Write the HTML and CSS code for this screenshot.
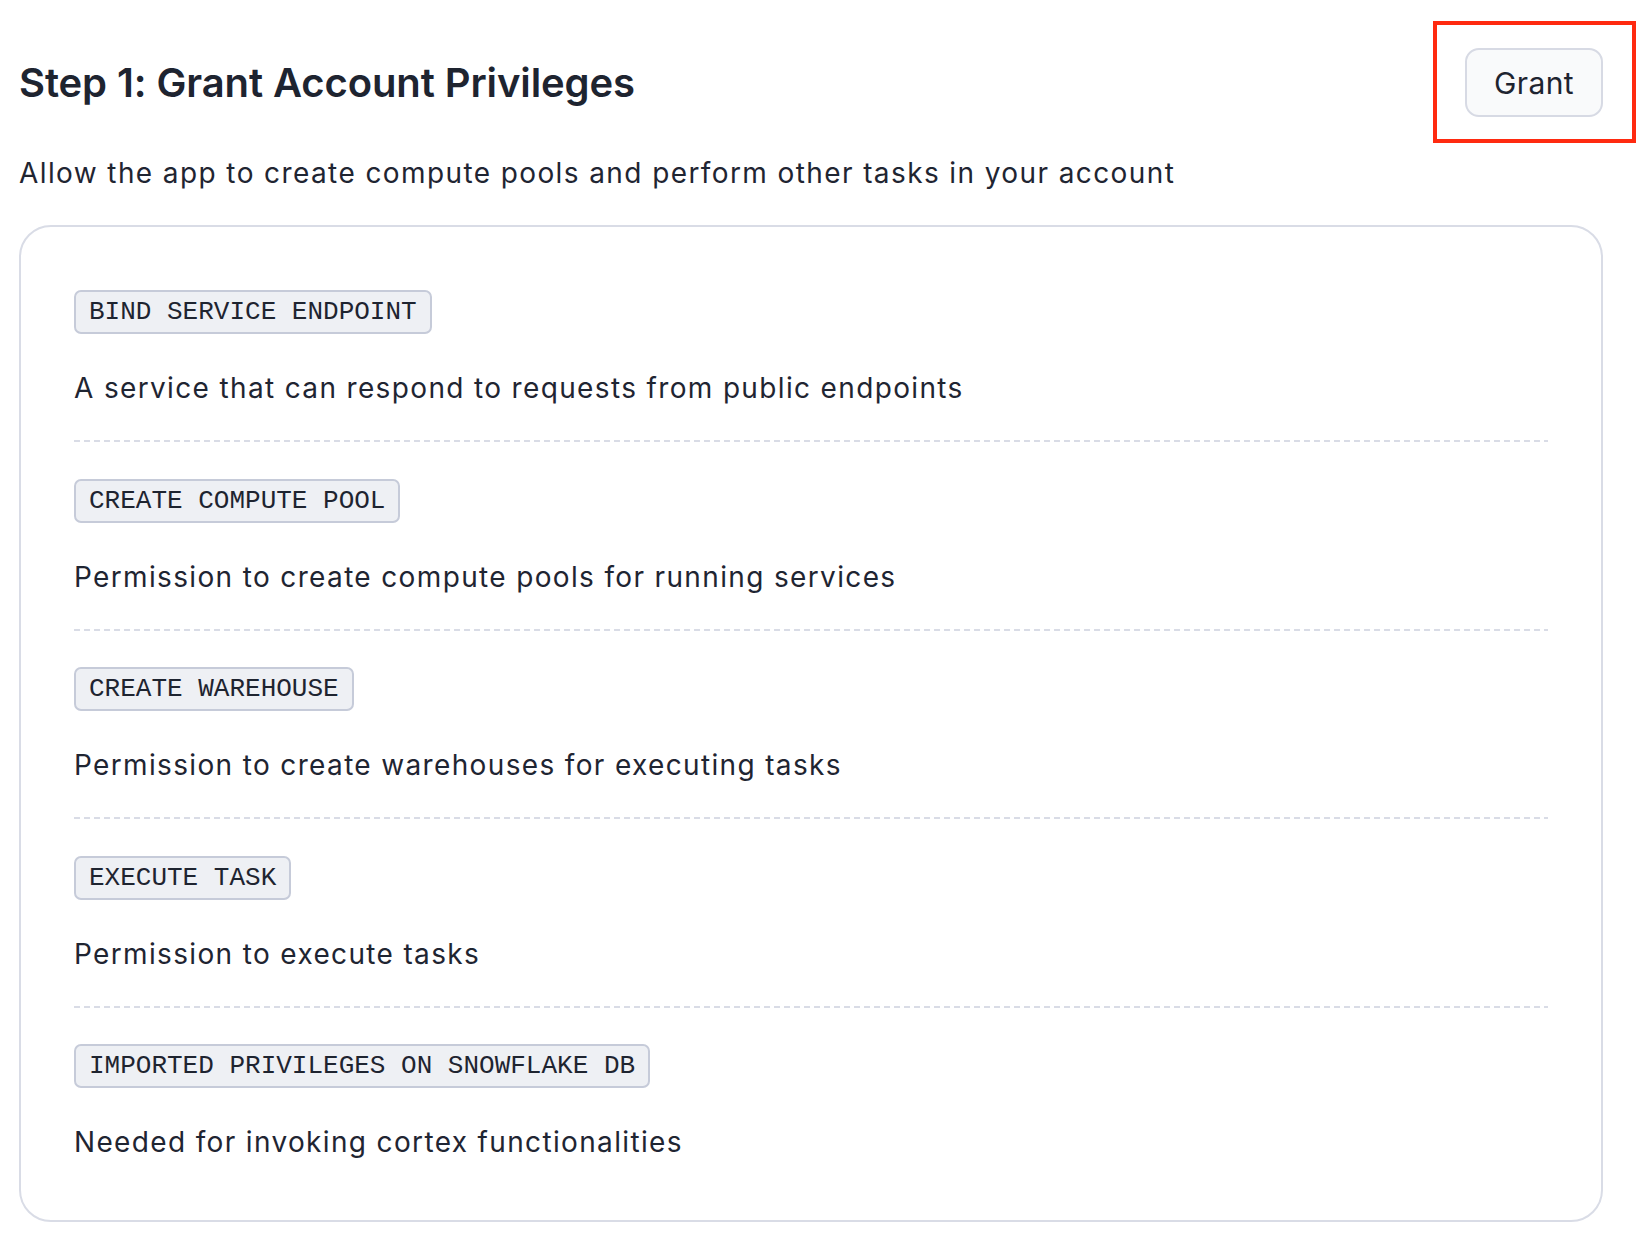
FILE: index.html
```html
<!DOCTYPE html>
<html lang="en">
<head>
<meta charset="utf-8">
<title>Step 1: Grant Account Privileges</title>
<link rel="stylesheet" href="styles.css">
</head>
<body>
<main class="page">
  <header class="head">
    <h1 class="title">Step 1: Grant Account Privileges</h1>
    <div class="btn-wrap">
      <button class="btn" type="button">Grant</button>
      <span class="highlight"></span>
    </div>
  </header>
  <p class="subtitle">Allow the app to create compute pools and perform other tasks in your account</p>
  <section class="card">
    <div class="item">
      <code class="tag">BIND SERVICE ENDPOINT</code>
      <p class="desc">A service that can respond to requests from public endpoints</p>
    </div>
    <div class="divider"></div>
    <div class="item">
      <code class="tag">CREATE COMPUTE POOL</code>
      <p class="desc">Permission to create compute pools for running services</p>
    </div>
    <div class="divider"></div>
    <div class="item">
      <code class="tag">CREATE WAREHOUSE</code>
      <p class="desc">Permission to create warehouses for executing tasks</p>
    </div>
    <div class="divider"></div>
    <div class="item">
      <code class="tag">EXECUTE TASK</code>
      <p class="desc">Permission to execute tasks</p>
    </div>
    <div class="divider"></div>
    <div class="item">
      <code class="tag">IMPORTED PRIVILEGES ON SNOWFLAKE DB</code>
      <p class="desc">Needed for invoking cortex functionalities</p>
    </div>
  </section>
</main>
</body>
</html>
```
FILE: styles.css
```css
* { box-sizing: border-box; }
html, body { margin: 0; padding: 0; background: #ffffff; }
body {
  font-family: Inter, "Noto Sans", sans-serif;
  color: #1f2532;
}
.page {
  width: 1584px;
  margin-left: 19px;
  padding-top: 48px;
}
.head {
  display: flex;
  align-items: center;
  justify-content: space-between;
  height: 69px;
}
.title {
  margin: 0;
  font-size: 40px;
  line-height: 48px;
  font-weight: 600;
  letter-spacing: -0.1px;
  color: #1e2430;
}
.btn-wrap {
  position: relative;
  display: flex;
}
.btn {
  width: 138px;
  height: 69px;
  border: 2px solid #d7dae4;
  border-radius: 14px;
  background: #f9fafb;
  font-family: Inter, "Noto Sans", sans-serif;
  font-size: 30px;
  font-weight: 400;
  letter-spacing: 0.4px;
  color: #1e2430;
  padding: 0;
}
.highlight {
  position: absolute;
  top: -27px;
  left: -32px;
  right: -33px;
  bottom: -26px;
  border: 4px solid #ff2a10;
  pointer-events: none;
}
.subtitle {
  margin: 36px 0 0;
  font-size: 28px;
  line-height: 40px;
  letter-spacing: 1.4px;
}
.card {
  margin-top: 32px;
  border: 2px solid #d9dce6;
  border-radius: 32px;
  padding: 63px 53px 58px;
}
.item {
  display: flex;
  flex-direction: column;
  align-items: flex-start;
}
.tag {
  display: inline-block;
  font-family: "Liberation Mono", "DejaVu Sans Mono", monospace;
  font-size: 26px;
  line-height: 28px;
  padding: 6px 13px;
  border: 2px solid #c6cbd9;
  border-radius: 7px;
  background: #eef0f4;
  color: #1e2430;
}
.desc {
  margin: 34px 0 0;
  font-size: 28px;
  line-height: 40px;
  letter-spacing: 1.35px;
}
.divider {
  height: 2px;
  margin: 32px 0 36.5px;
  background-image: repeating-linear-gradient(90deg, #d9dce6 0 6px, transparent 6px 10px);
}
```
